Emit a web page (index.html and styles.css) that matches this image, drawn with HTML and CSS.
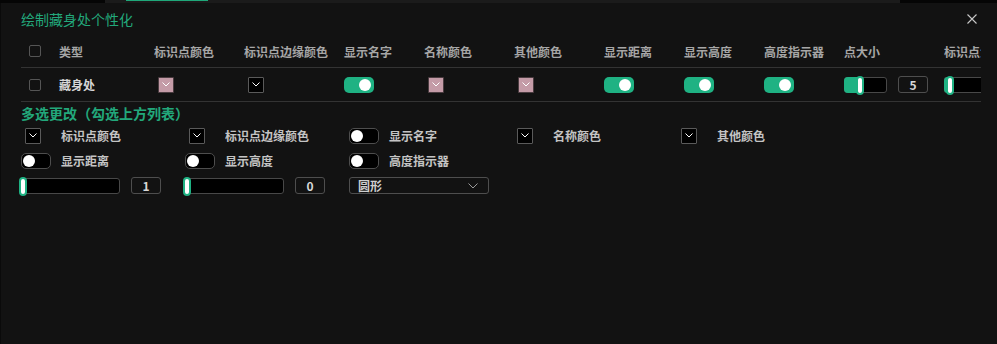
FILE: index.html
```html
<!DOCTYPE html>
<html lang="zh">
<head>
<meta charset="utf-8">
<title>绘制藏身处个性化</title>
<link rel="stylesheet" href="styles.css">
</head>
<body>
<div class="backdrop">
  <div class="bd-left"></div>
  <div class="bd-mid"><div class="bd-tab"></div></div>
  <div class="bd-right"></div>
</div>
<div class="dialog">
  <div class="titlebar">
    <div class="title">绘制藏身处个性化</div>
    <svg class="close" width="10" height="10" viewBox="0 0 10 10"><path d="M0.5 0.5 L9.5 9.5 M9.5 0.5 L0.5 9.5" stroke="#c8c8c8" stroke-width="1.1" fill="none"/></svg>
  </div>

  <div class="table">
    <div class="trow thead">
      <div class="cell"><span class="checkbox"></span></div>
      <div class="cell">类型</div>
      <div class="cell">标识点颜色</div>
      <div class="cell">标识点边缘颜色</div>
      <div class="cell">显示名字</div>
      <div class="cell">名称颜色</div>
      <div class="cell">其他颜色</div>
      <div class="cell">显示距离</div>
      <div class="cell">显示高度</div>
      <div class="cell">高度指示器</div>
      <div class="cell">点大小</div>
      <div class="cell">标识点大小</div>
    </div>
    <div class="trow tbody">
      <div class="cell"><span class="checkbox"></span></div>
      <div class="cell name">藏身处</div>
      <div class="cell"><span class="swatch pink"><svg width="8" height="5" viewBox="0 0 8 5"><path d="M0.5 0.5 L4 4 L7.5 0.5" stroke="#fff" stroke-width="1" fill="none"/></svg></span></div>
      <div class="cell"><span class="swatch dark"><svg width="8" height="5" viewBox="0 0 8 5"><path d="M0.5 0.5 L4 4 L7.5 0.5" stroke="#fff" stroke-width="1" fill="none"/></svg></span></div>
      <div class="cell"><span class="toggle on"><span class="knob"></span></span></div>
      <div class="cell"><span class="swatch pink"><svg width="8" height="5" viewBox="0 0 8 5"><path d="M0.5 0.5 L4 4 L7.5 0.5" stroke="#fff" stroke-width="1" fill="none"/></svg></span></div>
      <div class="cell"><span class="swatch pink"><svg width="8" height="5" viewBox="0 0 8 5"><path d="M0.5 0.5 L4 4 L7.5 0.5" stroke="#fff" stroke-width="1" fill="none"/></svg></span></div>
      <div class="cell"><span class="toggle on"><span class="knob"></span></span></div>
      <div class="cell"><span class="toggle on"><span class="knob"></span></span></div>
      <div class="cell"><span class="toggle on"><span class="knob"></span></span></div>
      <div class="cell">
        <span class="slider small"><span class="fill" style="width:14px"></span><span class="thumb" style="left:11px"></span></span>
        <span class="numbox">5</span>
      </div>
      <div class="cell">
        <span class="slider small wide"><span class="fill" style="width:5px"></span><span class="thumb" style="left:1px"></span></span>
      </div>
    </div>
  </div>

  <div class="multi-title">多选更改（勾选上方列表）</div>
  <div class="multi">
    <div class="item"><span class="ctl"><span class="swatch dark inset"><svg width="8" height="5" viewBox="0 0 8 5"><path d="M0.5 0.5 L4 4 L7.5 0.5" stroke="#fff" stroke-width="1" fill="none"/></svg></span></span><span class="label">标识点颜色</span></div>
    <div class="item"><span class="ctl"><span class="swatch dark inset"><svg width="8" height="5" viewBox="0 0 8 5"><path d="M0.5 0.5 L4 4 L7.5 0.5" stroke="#fff" stroke-width="1" fill="none"/></svg></span></span><span class="label">标识点边缘颜色</span></div>
    <div class="item"><span class="ctl"><span class="toggle off"><span class="knob"></span></span></span><span class="label">显示名字</span></div>
    <div class="item"><span class="ctl"><span class="swatch dark inset"><svg width="8" height="5" viewBox="0 0 8 5"><path d="M0.5 0.5 L4 4 L7.5 0.5" stroke="#fff" stroke-width="1" fill="none"/></svg></span></span><span class="label">名称颜色</span></div>
    <div class="item"><span class="ctl"><span class="swatch dark inset"><svg width="8" height="5" viewBox="0 0 8 5"><path d="M0.5 0.5 L4 4 L7.5 0.5" stroke="#fff" stroke-width="1" fill="none"/></svg></span></span><span class="label">其他颜色</span></div>

    <div class="item"><span class="ctl"><span class="toggle off"><span class="knob"></span></span></span><span class="label">显示距离</span></div>
    <div class="item"><span class="ctl"><span class="toggle off"><span class="knob"></span></span></span><span class="label">显示高度</span></div>
    <div class="item"><span class="ctl"><span class="toggle off"><span class="knob"></span></span></span><span class="label">高度指示器</span></div>
    <div class="item"></div>
    <div class="item"></div>

    <div class="item"><span class="slider big"><span class="thumb" style="left:-3px"></span></span><span class="numbox">1</span></div>
    <div class="item"><span class="slider big"><span class="thumb" style="left:-3px"></span></span><span class="numbox">0</span></div>
    <div class="item"><span class="select"><span>圆形</span><svg width="10" height="6" viewBox="0 0 10 6"><path d="M0.5 0.5 L5 5 L9.5 0.5" stroke="#9a9a9a" stroke-width="1" fill="none"/></svg></span></div>
  </div>
</div>
</body>
</html>
```

FILE: styles.css
```css
* { box-sizing: border-box; }
html, body { margin: 0; padding: 0; }
body {
  width: 997px;
  height: 344px;
  overflow: hidden;
  background: #121212;
  font-family: "Noto Sans CJK SC", "Noto Sans", sans-serif;
  color: #c8c8c8;
}

.backdrop { display: flex; height: 3px; }
.bd-left { width: 105px; background: #050505; }
.bd-mid { flex: 1; background: #1b1b1b; padding-left: 21px; }
.bd-tab { width: 82px; height: 1px; background: #1fa87a; }
.bd-right { width: 97px; background: #050505; }

.dialog {
  height: 341px;
  border-left: 1px solid #0a0a0a;
  padding-left: 20px;
}

.titlebar {
  display: flex;
  align-items: center;
  justify-content: space-between;
  height: 32px;
  padding-right: 20px;
}
.title { font-size: 14px; color: #22a87b; line-height: 1; }
.close { display: block; }

.table { width: 960px; overflow: hidden; }
.trow {
  display: grid;
  grid-template-columns: 30px 95px 90px 100px 80px 90px 90px 80px 80px 80px 100px 100px;
  border-bottom: 1px solid #333;
  width: 1015px;
}
.thead { height: 33px; }
.tbody { height: 34px; }
.cell {
  display: flex;
  align-items: center;
  padding-left: 8px;
  font-size: 12px;
  font-weight: 700;
  white-space: nowrap;
  overflow: hidden;
}
.thead .cell { color: #a6a6a6; }
.name { color: #d6d6d6; }

.checkbox {
  width: 12px; height: 12px;
  border: 1px solid #555;
  border-radius: 2px;
}

.swatch {
  width: 16px; height: 16px;
  display: inline-flex;
  align-items: center;
  justify-content: center;
  border-radius: 1px;
}
.swatch.pink { background: #c49ba7; border: 1px solid #4a3c40; }
.swatch.dark { background: #000; border: 1px solid #5a5a5a; }
.swatch.inset { margin-left: 4px; }
.cell .swatch { margin-left: 4px; }

.toggle {
  position: relative;
  display: inline-block;
  width: 30px; height: 16px;
  border-radius: 5px;
}
.toggle.on { background: #1fb283; }
.toggle.off { background: #000; border: 1px solid #4e4e4e; }
.knob {
  position: absolute;
  top: 2px;
  width: 12px; height: 12px;
  border-radius: 50%;
  background: #fff;
}
.toggle.on .knob { right: 3px; }
.toggle.off .knob { left: 1px; top: 1px; }

.slider {
  position: relative;
  display: inline-block;
  background: #000;
  border: 1px solid #484848;
  border-radius: 3px;
}
.slider.small { width: 43px; height: 16px; }
.slider.small.wide { width: 60px; border-right: none; }
.slider.big { width: 99px; height: 16px; }
.fill {
  position: absolute;
  left: -1px; top: -1px; bottom: -1px;
  background: #1fb283;
  border-radius: 4px 0 0 4px;
}
.thumb {
  position: absolute;
  top: -2px;
  width: 8px; height: 19px;
  background: #fff;
  border: 2px solid #1fb283;
  border-radius: 4px;
}

.numbox {
  display: inline-flex;
  align-items: center;
  justify-content: center;
  width: 30px; height: 17px;
  border: 1px solid #4e4e4e;
  border-radius: 3px;
  font-size: 12px;
  font-weight: 700;
  color: #d8d8d8;
  margin-left: 11px;
}

.multi-title {
  height: 21px;
  display: flex;
  align-items: center;
  font-size: 14px;
  font-weight: 700;
  color: #22a87b;
}
.multi {
  display: grid;
  grid-template-columns: repeat(5, 164px);
  grid-auto-rows: 25px;
}
.item {
  display: flex;
  align-items: center;
}
.ctl { width: 40px; display: flex; align-items: center; }
.label { font-size: 12px; font-weight: 700; color: #c4c4c4; white-space: nowrap; }

.select {
  width: 140px; height: 17px;
  border: 1px solid #4e4e4e;
  border-radius: 3px;
  display: flex;
  align-items: center;
  justify-content: space-between;
  padding: 0 10px 0 8px;
  font-size: 12px;
  font-weight: 700;
  color: #cfcfcf;
}
```
